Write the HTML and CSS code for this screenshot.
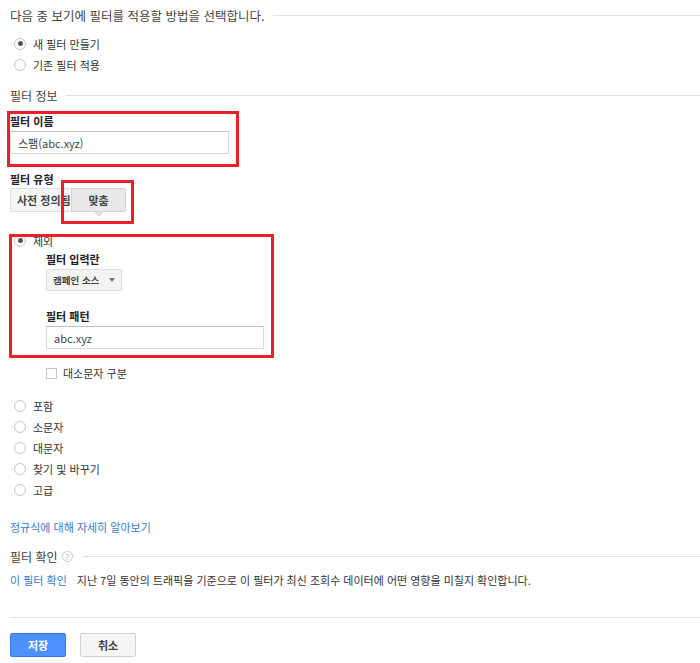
FILE: index.html
```html
<!DOCTYPE html>
<html lang="ko">
<head>
	<meta charset="UTF-8">
	<meta name="viewport" content="width=device-width, initial-scale=1.0">
	<title>필터 추가</title>
	<link rel="stylesheet" href="styles.css">
</head>
<body>

	<div class="page">
		<div class="legend legend--big">다음 중 보기에 필터를 적용할 방법을 선택합니다.</div>

		<div class="choices choices--top">
			<label class="choice"><span class="radio checked"></span>새 필터 만들기</label>
			<label class="choice"><span class="radio"></span>기존 필터 적용</label>
		</div>

		<div class="legend legend--section">필터 정보</div>

		<div class="field field--name">
			<div class="field__label">필터 이름</div>
			<div class="text-input text-input--name">스팸(abc.xyz)</div>
		</div>

		<div class="field field--type">
			<div class="field__label">필터 유형</div>
			<div class="segmented">
				<button class="segmented__item segmented__item--first">사전 정의됨</button>
				<button class="segmented__item segmented__item--on">맞춤</button>
			</div>
		</div>

		<div class="choices choices--kind">
			<label class="choice"><span class="radio checked"></span>제외</label>

			<div class="sub">
				<div class="field__label">필터 입력란</div>
				<div class="select">캠페인 소스<span class="select__caret"></span></div>

				<div class="field__label field__label--pattern">필터 패턴</div>
				<div class="text-input text-input--pattern">abc.xyz</div>

				<label class="check"><span class="checkbox"></span>대소문자 구분</label>
			</div>

			<label class="choice choice--spaced"><span class="radio"></span>포함</label>
			<label class="choice"><span class="radio"></span>소문자</label>
			<label class="choice"><span class="radio"></span>대문자</label>
			<label class="choice"><span class="radio"></span>찾기 및 바꾸기</label>
			<label class="choice"><span class="radio"></span>고급</label>
		</div>

		<a class="link link--regex" href="#">정규식에 대해 자세히 알아보기</a>

		<div class="legend legend--section legend--verify">필터 확인 <span class="help">?</span></div>

		<div class="verify">
			<a class="link" href="#">이 필터 확인</a>
			<span class="verify__text">지난 7일 동안의 트래픽을 기준으로 이 필터가 최신 조회수 데이터에 어떤 영향을 미칠지 확인합니다.</span>
		</div>

		<div class="actions">
			<button class="btn btn--primary">저장</button>
			<button class="btn">취소</button>
		</div>
	</div>

	<!-- annotation boxes drawn over the form -->
	<div class="mark mark--name"></div>
	<div class="mark mark--custom"></div>
	<div class="mark mark--exclude"></div>

</body>
</html>
```

FILE: styles.css
```css
* {
    margin: 0;
    padding: 0;
    box-sizing: border-box;
}

body {
    position: relative;
    width: 700px;
    height: 663px;
    overflow: hidden;
    background: #fff;
    color: #333;
    font-family: 'Noto Sans CJK KR', 'Noto Sans', sans-serif;
    font-size: 11px;
}

.page {
    padding-left: 10px;
}

/* section titles with a rule running to the right edge */
.legend {
    display: flex;
    align-items: center;
    gap: 8px;
    color: #444;
    white-space: nowrap;
}

.legend::after {
    content: '';
    flex: 1;
    border-top: 1px solid #e3e3e3;
}

.legend--big {
    height: 30px;
    font-size: 12.5px;
}

.legend--section {
    height: 20px;
    margin-top: 10px;
    font-size: 12px;
}

.legend--verify {
    margin-top: 9px;
    gap: 4px;
}

.help {
    display: inline-flex;
    align-items: center;
    justify-content: center;
    width: 11px;
    height: 11px;
    margin-right: 6px;
    border: 1px solid #ccc;
    border-radius: 50%;
    color: #bbb;
    font-size: 8px;
}

/* radio lists */
.choices--top {
    margin-top: 3px;
    padding-left: 4px;
}

.choices--kind {
    margin-top: 18px;
    padding-left: 4px;
}

.choice {
    display: flex;
    align-items: center;
    gap: 7px;
    height: 21px;
}

.choice--spaced {
    margin-top: 12px;
}

.radio {
    width: 12px;
    height: 12px;
    border: 1px solid #c8c8c8;
    border-radius: 50%;
    background: #fff;
    position: relative;
}

.radio.checked::after {
    content: '';
    position: absolute;
    left: 2.5px;
    top: 2.5px;
    width: 5px;
    height: 5px;
    border-radius: 50%;
    background: #555;
}

/* labelled fields */
.field__label {
    height: 16px;
    line-height: 16px;
    font-weight: bold;
    color: #222;
}

.field--name {
    margin-top: 8px;
}

.field--type {
    margin-top: 17px;
}

.text-input {
    display: flex;
    align-items: center;
    height: 23px;
    margin-top: 2px;
    padding: 0 7px;
    border: 1px solid #d9d9d9;
    border-top-color: #c0c0c0;
    background: #fff;
    color: #444;
}

.text-input--name {
    width: 219px;
}

.text-input--pattern {
    width: 218px;
}

.segmented {
    display: flex;
    margin-top: 1px;
}

.segmented__item {
    position: relative;
    height: 24px;
    border: 1px solid #e0e0e0;
    background: #f5f5f5;
    color: #444;
    font-family: inherit;
    font-size: 11px;
    font-weight: bold;
}

.segmented__item--first {
    width: 61px;
    padding-left: 6px;
    overflow: hidden;
    white-space: nowrap;
    text-align: left;
    border-right: none;
    border-radius: 2px 0 0 2px;
}

.segmented__item--on {
    width: 55px;
    border-color: #d5d5d5;
    background: #e8e8e8;
    border-radius: 0 2px 2px 0;
}

.segmented__item--on::after {
    content: '';
    position: absolute;
    left: 50%;
    bottom: -6px;
    margin-left: -5px;
    border-left: 5px solid transparent;
    border-right: 5px solid transparent;
    border-top: 5px solid #e0e0e0;
}

.sub {
    padding: 0 0 0 32px;
}

.select {
    display: inline-flex;
    align-items: center;
    gap: 10px;
    height: 22px;
    margin-top: 2px;
    padding: 0 6px;
    border: 1px solid #dcdcdc;
    border-radius: 2px;
    background: #f3f3f3;
    color: #444;
    font-weight: bold;
    font-size: 9.5px;
}

.select__caret {
    border-left: 3px solid transparent;
    border-right: 3px solid transparent;
    border-top: 4px solid #777;
}

.field__label--pattern {
    margin-top: 17px;
}

.check {
    display: flex;
    align-items: center;
    gap: 6px;
    height: 20px;
    margin-top: 14px;
}

.checkbox {
    width: 11px;
    height: 11px;
    border: 1px solid #c6c6c6;
    background: #fff;
}

.link {
    color: #3e79c8;
    text-decoration: none;
}

.link--regex {
    display: block;
    margin-top: 17px;
    height: 20px;
    line-height: 20px;
}

.verify {
    display: flex;
    gap: 10px;
    height: 20px;
    margin-top: 4px;
    line-height: 20px;
}

.verify__text {
    color: #333;
}

.actions {
    display: flex;
    gap: 14px;
    margin-top: 27px;
    padding-top: 15px;
    border-top: 1px solid #e3e3e3;
}

.btn {
    width: 56px;
    height: 24px;
    border: 1px solid #d0d0d0;
    border-radius: 2px;
    background: #f5f5f5;
    color: #444;
    font-family: inherit;
    font-size: 11px;
    font-weight: bold;
}

.btn--primary {
    border-color: #3079ed;
    background: #4d90fe;
    color: #fff;
}

/* red annotation boxes */
.mark {
    position: absolute;
    border: 3px solid #e8202a;
}

.mark--name {
    left: 7px;
    top: 111px;
    width: 232px;
    height: 56px;
}

.mark--custom {
    left: 61px;
    top: 180px;
    width: 73px;
    height: 44px;
}

.mark--exclude {
    left: 9px;
    top: 234px;
    width: 265px;
    height: 124px;
}
```
